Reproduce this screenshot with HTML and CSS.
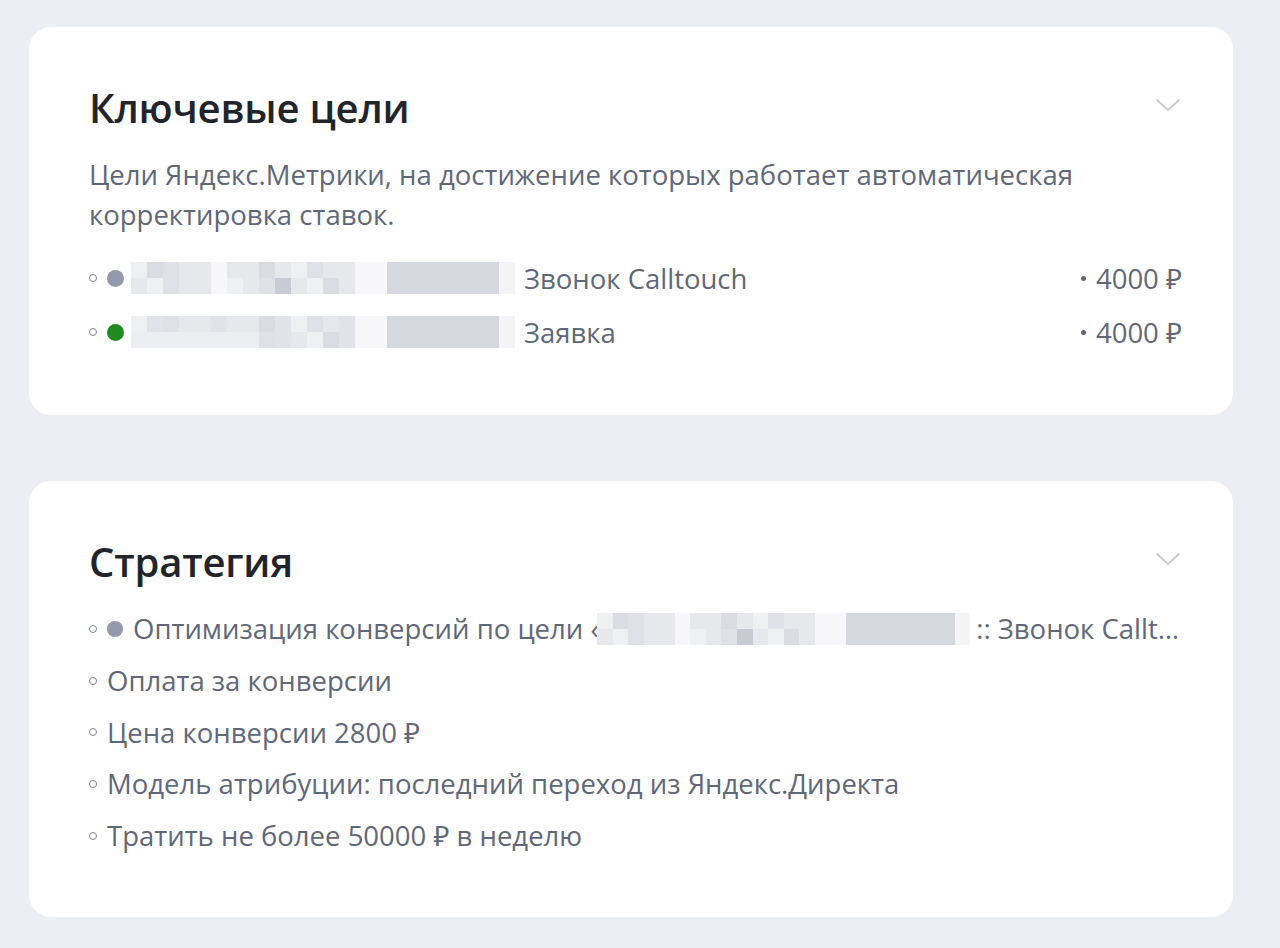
FILE: index.html
```html
<!DOCTYPE html>
<html lang="ru">
  <head>
    <meta charset="UTF-8" />
    <meta name="viewport" content="width=device-width, initial-scale=1.0" />
    <title>Ключевые цели и стратегия</title>
    <link rel="stylesheet" href="styles.css">
  </head>
  <body>
    <section class="card card-goals">
      <div class="card-head">
        <h2>Ключевые цели</h2>
        <svg class="chevron" width="26" height="14" viewBox="0 0 26 14"><path d="M1.5 1.5 L13 12 L24.5 1.5" fill="none" stroke="#c9cbd1" stroke-width="2"/></svg>
      </div>
      <p class="desc">Цели Яндекс.Метрики, на достижение которых работает автоматическая корректировка ставок.</p>
      <ul class="list goals">
        <li>
          <span class="ring"></span>
          <span class="dot dot-grey"></span>
          <span class="pix pix-a"><i></i><i></i><i></i><i></i><i></i><i></i><i></i><i></i><i></i><i></i><i></i><i></i><i></i><i></i><i></i><i></i><i></i><i></i><i></i><i></i><i></i><i></i><i></i><i></i><i></i><i></i><i></i><i></i><i></i><i></i><i></i><i></i><i></i><i></i><i></i><i></i><i></i><i></i><i></i><i></i><i></i><i></i><i></i><i></i><i></i><i></i><i></i><i></i></span>
          <span class="goal-name">Звонок Calltouch</span>
          <span class="price">4000 ₽</span>
        </li>
        <li>
          <span class="ring"></span>
          <span class="dot dot-green"></span>
          <span class="pix pix-b"><i></i><i></i><i></i><i></i><i></i><i></i><i></i><i></i><i></i><i></i><i></i><i></i><i></i><i></i><i></i><i></i><i></i><i></i><i></i><i></i><i></i><i></i><i></i><i></i><i></i><i></i><i></i><i></i><i></i><i></i><i></i><i></i><i></i><i></i><i></i><i></i><i></i><i></i><i></i><i></i><i></i><i></i><i></i><i></i><i></i><i></i><i></i><i></i></span>
          <span class="goal-name">Заявка</span>
          <span class="price">4000 ₽</span>
        </li>
      </ul>
    </section>

    <section class="card card-strategy">
      <div class="card-head">
        <h2>Стратегия</h2>
        <svg class="chevron" width="26" height="14" viewBox="0 0 26 14"><path d="M1.5 1.5 L13 12 L24.5 1.5" fill="none" stroke="#c9cbd1" stroke-width="2"/></svg>
      </div>
      <ul class="list strategy">
        <li class="clip">
          <span class="ring"></span>
          <span class="dot dot-grey small"></span>
          <span class="text">Оптимизация конверсий по цели «</span>
          <span class="pix pix-c"><i></i><i></i><i></i><i></i><i></i><i></i><i></i><i></i><i></i><i></i><i></i><i></i><i></i><i></i><i></i><i></i><i></i><i></i><i></i><i></i><i></i><i></i><i></i><i></i><i></i><i></i><i></i><i></i><i></i><i></i><i></i><i></i><i></i><i></i><i></i><i></i><i></i><i></i><i></i><i></i><i></i><i></i><i></i><i></i><i></i><i></i><i></i><i></i></span>
          <span class="text tail">:: Звонок Calltouch»</span>
        </li>
        <li><span class="ring"></span><span class="text">Оплата за конверсии</span></li>
        <li><span class="ring"></span><span class="text">Цена конверсии 2800 ₽</span></li>
        <li><span class="ring"></span><span class="text">Модель атрибуции: последний переход из Яндекс.Директа</span></li>
        <li><span class="ring"></span><span class="text">Тратить не более 50000 ₽ в неделю</span></li>
      </ul>
    </section>
  </body>
</html>
```

FILE: styles.css
```css
body {
  margin: 0;
  padding: 27px 47px 31px 29px;
  background-color: #ebeef3;
  font-family: "Open Sans", "Noto Sans", sans-serif;
  color: #5f677a;
}
.card {
  background-color: #fff;
  border-radius: 22px;
  padding: 59px 51px 0 60px;
  box-sizing: border-box;
}
.card-goals {
  height: 388px;
}
.card-strategy {
  margin-top: 66px;
  height: 436px;
}
.card-head {
  display: flex;
  justify-content: space-between;
  align-items: flex-start;
}
.card-head h2 {
  margin: 0;
  font-size: 40px;
  line-height: 44px;
  font-weight: 600;
  color: #21242b;
  letter-spacing: -0.2px;
}
.chevron {
  margin-top: 12px;
  margin-right: 1px;
}
.desc {
  margin: 25px 0 0;
  font-size: 27.5px;
  line-height: 40px;
  max-width: 1020px;
}
.list {
  list-style: none;
  margin: 0;
  padding: 0;
  font-size: 27.5px;
}
.goals {
  margin-top: 16px;
}
.goals li {
  height: 54px;
}
.strategy {
  margin-top: 19px;
}
.strategy li {
  height: 51.7px;
}
.list li {
  display: flex;
  align-items: center;
  white-space: nowrap;
}
.ring {
  width: 6px;
  height: 6px;
  border: 1.5px solid #7c8396;
  border-radius: 50%;
  margin-right: 10px;
  flex-shrink: 0;
}
.dot {
  width: 17px;
  height: 17px;
  border-radius: 50%;
  flex-shrink: 0;
}
.dot.small {
  width: 16px;
  height: 16px;
  margin-right: 10px;
}
.dot-grey {
  background-color: #9298ad;
}
.dot-green {
  background-color: #1f8a1f;
}
.pix {
  display: grid;
  grid-template-columns: repeat(24, 16px);
  grid-template-rows: 16px 16px;
  flex-shrink: 0;
}
.goals .pix {
  margin-left: 7px;
  margin-right: 9px;
}
.pix i {
  background-color: #e7e8ec;
}
.pix i:nth-child(3n) { background-color: #dfe1e6; }
.pix i:nth-child(5n+1) { background-color: #eef0f2; }
.pix i:nth-child(7n+2) { background-color: #dadce2; }
.pix i:nth-child(24n+6),
.pix i:nth-child(24n+15),
.pix i:nth-child(24n+16) { background-color: #f7f7f9; }
.pix i:nth-child(n+17):nth-child(-n+23),
.pix i:nth-child(n+41):nth-child(-n+47) { background-color: #d6d8df; }
.pix i:nth-child(20),
.pix i:nth-child(44),
.pix i:nth-child(34) { background-color: #c8cbd4; }
.pix i:nth-child(24n) { background-color: #f4f4f6; }
.pix-b i:nth-child(4n+2) { background-color: #e1e3e8; }
.pix-b i:nth-child(n+25):nth-child(-n+32) { background-color: #eceef1; }
.pix-c {
  grid-template-columns: repeat(24, 15.55px);
  margin-left: -7px;
  margin-right: 6px;
}
.price {
  margin-left: auto;
  display: flex;
  align-items: center;
}
.price::before {
  content: "";
  width: 5px;
  height: 5px;
  border-radius: 50%;
  background-color: #5f677a;
  margin-right: 10px;
}
.clip {
  overflow: hidden;
}
.clip .tail {
  overflow: hidden;
  text-overflow: ellipsis;
  min-width: 0;
}
```
